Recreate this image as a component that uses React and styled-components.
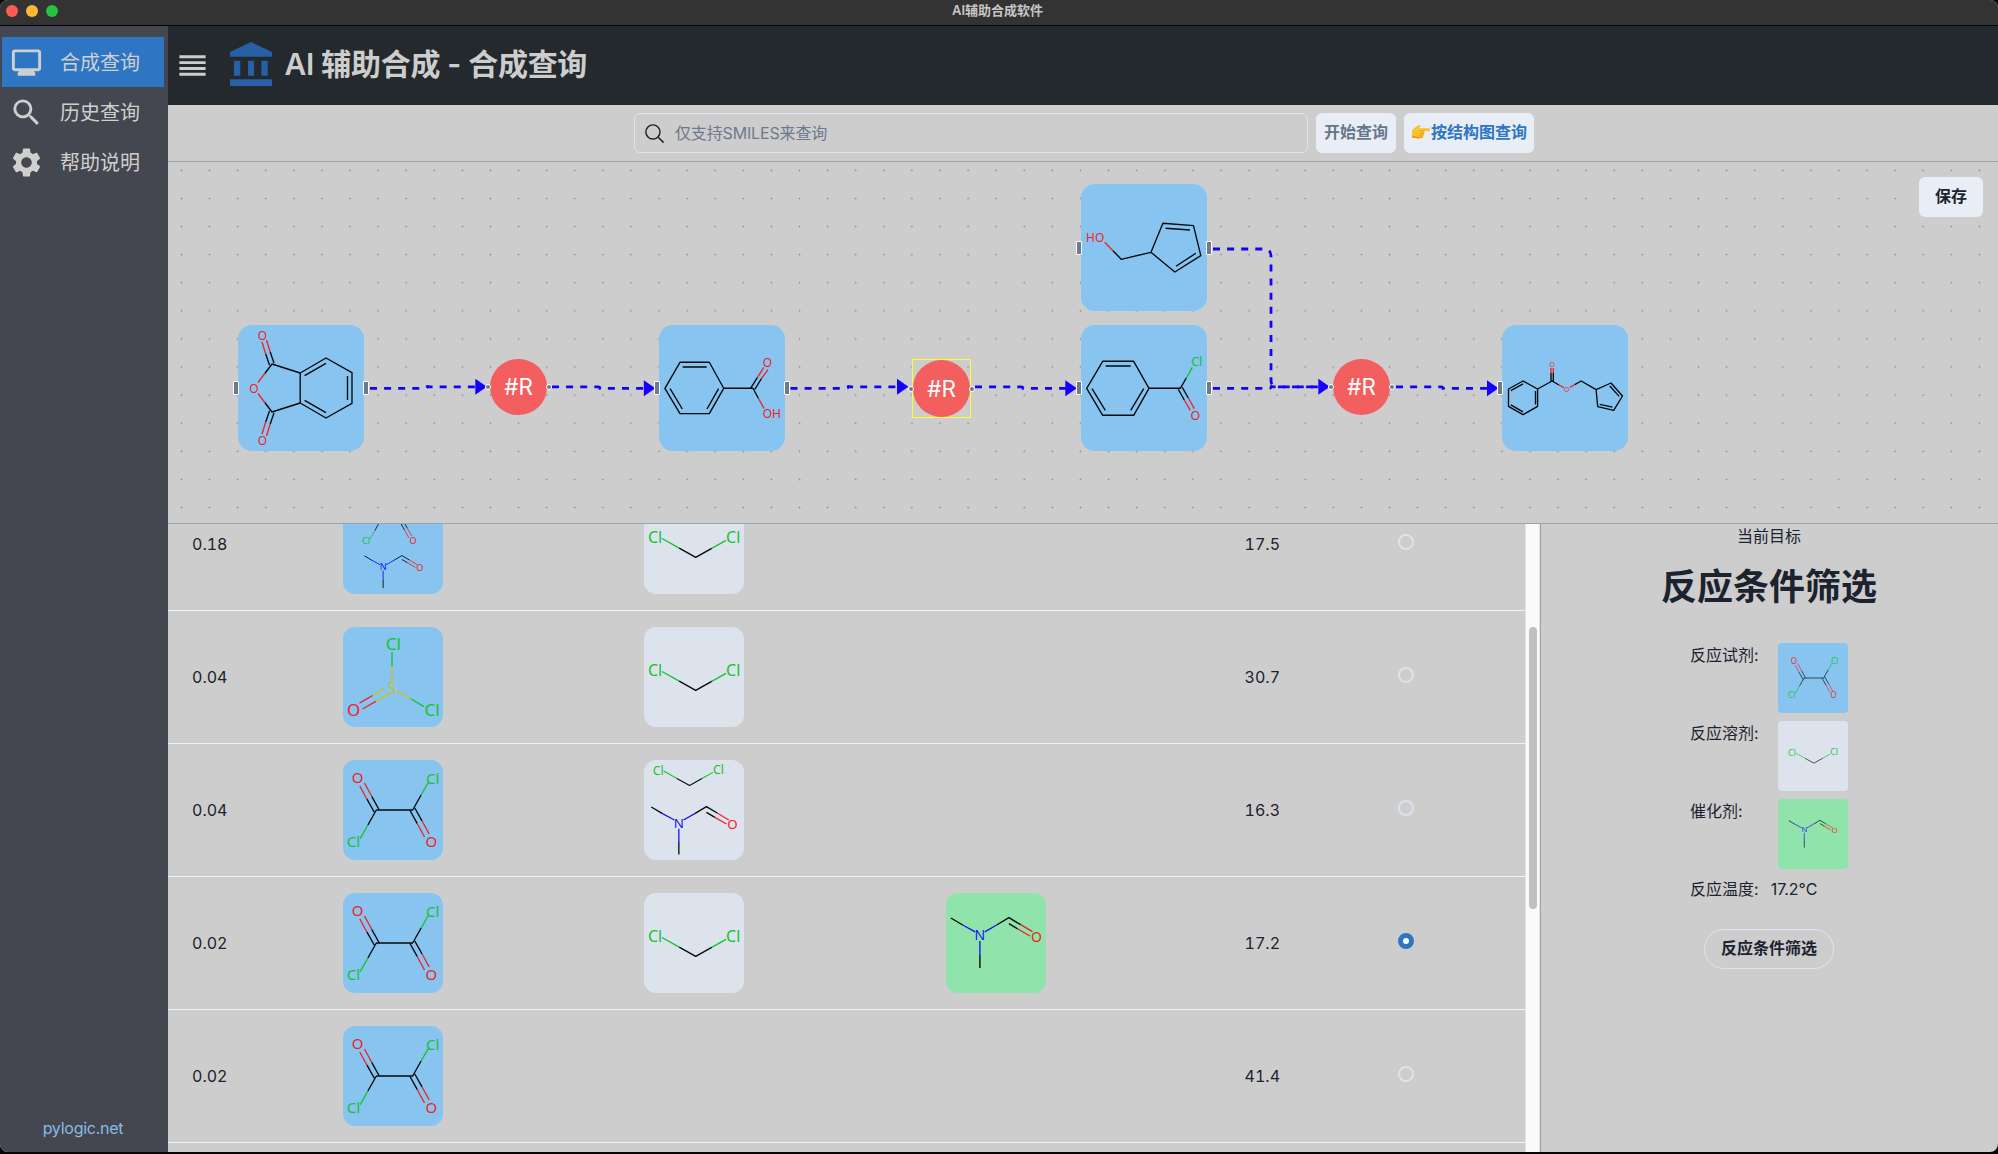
import React from "react";
import styled, { createGlobalStyle } from "styled-components";
import { MdMonitor, MdSearch, MdSettings, MdReorder } from "react-icons/md";
import { IoSearchOutline } from "react-icons/io5";

const color = {
  page: "#cdcdcd",
  line: "#97a4b4",
  pale: "#e9eef6",
  blue: "#87c4ef",
  mist: "#dde3ed",
  green: "#8fe3ab",
  accent: "#2e75c4",
  ink: "#1c222e",
  edge: "#1400ff",
};

const Global = createGlobalStyle`
  *, *::before, *::after { box-sizing: border-box; }
  body {
    margin: 0;
    background: #060606;
    color: ${color.ink};
    font: 16px/24px Inter, "Noto Sans CJK SC", sans-serif;
  }
  h1, h2, p { margin: 0; }
  button { font: inherit; padding: 0; cursor: pointer; }
`;

const Window = styled.div`
  width: 1998px;
  height: 1152px;
  display: flex;
  flex-direction: column;
  border-radius: 8px;
  overflow: hidden;
  background: ${color.page};
`;

const TitleBar = styled.header`
  flex: none;
  height: 26px;
  display: grid;
  grid-template-columns: 1fr auto 1fr;
  align-items: center;
  padding: 0 9px 3px 6px;
  background: #333;
  border-bottom: 1px solid #050505;
  color: #c6c6c6;
  font-size: 13px;
  font-weight: 600;
  line-height: 20px;
`;

const WindowTitle = styled.span`
  padding-bottom: 2px;
`;

const Lights = styled.div`
  display: flex;
  gap: 8px;
`;

const Light = styled.span`
  width: 12px;
  height: 12px;
  border-radius: 50%;
  background: ${(p) => p.$tone};
`;

const Body = styled.div`
  flex: 1;
  min-height: 0;
  display: flex;
`;

const Sidebar = styled.nav`
  flex: none;
  width: 168px;
  display: flex;
  flex-direction: column;
  padding: 11px 4px 12px 2px;
  background: #44474f;
`;

const NavItem = styled.a`
  height: 50px;
  display: flex;
  align-items: center;
  gap: 16px;
  padding-left: 7px;
  background: ${(p) => (p.$active ? color.accent : "transparent")};
  color: #cfcfcf;
  font-size: 20px;
`;

const NavLabel = styled.span`
  padding-top: 1px;
`;

const SiteLink = styled.a`
  margin-top: auto;
  text-align: center;
  color: #85bde6;
  letter-spacing: -0.25px;
`;

const Main = styled.main`
  flex: 1;
  min-width: 0;
  display: flex;
  flex-direction: column;
`;

const Header = styled.div`
  flex: none;
  height: 79px;
  display: flex;
  align-items: center;
  padding-left: 7px;
  background: #23292d;
  color: #cdcdcd;
`;

const Brand = styled.h1`
  display: flex;
  align-items: center;
  gap: 13px;
  margin-left: 19.5px;
  padding-bottom: 3px;
  font-size: 30px;
  line-height: 40px;
  font-weight: 600;
  letter-spacing: -0.3px;
`;

const SearchBar = styled.div`
  flex: none;
  height: 57px;
  display: flex;
  justify-content: center;
  gap: 8px;
  padding: 8px 0 0 2px;
  border-bottom: 1px solid ${color.line};
`;

const SearchField = styled.label`
  width: 674px;
  height: 40px;
  display: flex;
  align-items: center;
  gap: 9px;
  padding-left: 8px;
  border: 1px solid #dfe5ee;
  border-radius: 6px;
  color: ${color.ink};
`;

const SearchInput = styled.input`
  flex: 1;
  border: 0;
  padding: 0;
  outline: 0;
  background: transparent;
  font: inherit;
  letter-spacing: -0.15px;
  &::placeholder { color: #6d7a8e; opacity: 1; }
`;

const Button = styled.button`
  width: ${(p) => p.$width}px;
  height: 40px;
  display: flex;
  align-items: center;
  justify-content: center;
  padding-bottom: 2px;
  border: ${(p) => (p.$outline ? "1px solid #dfe5ee" : "0")};
  border-radius: ${(p) => (p.$outline ? "20px" : "6px")};
  background: ${(p) => (p.$outline ? "transparent" : color.pale)};
  color: ${(p) => p.$tone || color.ink};
  font-weight: 600;
`;

const Canvas = styled.section`
  flex: none;
  position: relative;
  height: 362px;
  overflow: hidden;
  border-bottom: 1px solid ${color.line};
  background-image: radial-gradient(circle at 14.05px 14.05px, #8e8e8e 0.6px, transparent 1.2px);
  background-size: 28.1px 28.1px;
  background-position: -0.6px -5.7px;
`;

const Edges = styled.svg`
  position: absolute;
  inset: 0;
  width: 100%;
  height: 100%;
`;

const SavePanel = styled.div`
  position: absolute;
  top: 15px;
  right: 15px;
`;

const MoleculeNode = styled.div`
  position: absolute;
  left: ${(p) => p.$x}px;
  top: ${(p) => p.$y}px;
  width: 126.4px;
  height: 126.4px;
  border-radius: 14px;
  background: ${color.blue};
`;

const ReactionNode = styled.div`
  position: absolute;
  left: ${(p) => p.$x}px;
  top: ${(p) => p.$y}px;
  width: ${(p) => (p.$selected ? 59 : 56.4)}px;
  height: ${(p) => (p.$selected ? 59 : 56.4)}px;
  border: ${(p) => (p.$selected ? "1px solid #ffff2e" : "0")};
`;

const ReactionDisc = styled.div`
  width: 100%;
  height: 100%;
  display: grid;
  place-items: center;
  border-radius: 50%;
  background: #f35e5e;
  color: #fff;
  font-size: 22.4px;
`;

const Handle = styled.span`
  position: absolute;
  top: 50%;
  ${(p) => p.$side}: -5px;
  width: 6px;
  height: ${(p) => (p.$round ? 6.5 : 14)}px;
  margin-top: ${(p) => (p.$round ? -3 : -7)}px;
  border: 1px solid #fff;
  border-radius: ${(p) => (p.$round ? 3 : 1)}px;
  background: #6b7b8d;
`;

const Lower = styled.div`
  flex: 1;
  min-height: 0;
  display: flex;
`;

const TableArea = styled.div`
  width: 1357px;
  overflow: hidden;
  font-variant-numeric: lining-nums tabular-nums;
`;

const Rows = styled.div`
  margin-top: -46px;
`;

const Row = styled.div`
  height: 133px;
  display: grid;
  grid-template-columns: 151px 301px 302px 250px 132px 221px;
  align-items: center;
  border-bottom: 1px solid #edf1f8;
`;

const Cell = styled.div`
  padding: 0 24px;
  text-align: ${(p) => (p.$numeric ? "right" : "left")};
`;

const RadioCell = styled.div`
  padding: 0 0 4px 93.5px;
`;

const Radio = styled.span`
  display: block;
  width: 16px;
  height: 16px;
  border-radius: 50%;
  border: ${(p) => (p.$on ? `5px solid ${color.accent}` : "2px solid #dde3ec")};
  background: ${(p) => (p.$on ? "#fff" : "transparent")};
`;

const Tile = styled.div`
  width: ${(p) => p.$size || 100}px;
  height: ${(p) => p.$size || 100}px;
  padding: ${(p) => (p.$size ? 8 : 0)}px;
  border-radius: ${(p) => (p.$size ? 4 : 12)}px;
  background: ${(p) => p.$tone};
`;

const ScrollTrack = styled.div`
  width: 15px;
  padding: 103px 2px 0 3px;
  border-left: 1px solid #e4e4e4;
  border-right: 1px solid #e4e4e4;
  background: #fafafa;
`;

const ScrollThumb = styled.div`
  width: 8px;
  height: 282px;
  border-radius: 4px;
  background: #c1c1c1;
`;

const Detail = styled.aside`
  flex: 1;
  display: flex;
  flex-direction: column;
  align-items: center;
  padding-right: 1px;
  border-left: 1px solid ${color.line};
`;

const DetailTitle = styled.h2`
  margin-top: 18px;
  font-size: 36px;
  line-height: 43px;
  font-weight: 700;
`;

const Conditions = styled.div`
  width: 158px;
  display: flex;
  flex-direction: column;
  gap: 8px;
  margin: 34px 0 28px;
`;

const Condition = styled.div`
  display: flex;
  justify-content: ${(p) => (p.$tight ? "flex-start" : "space-between")};
  gap: ${(p) => (p.$tight ? 12 : 0)}px;
`;

const Drawing = styled.svg`
  display: block;
  width: 100%;
  height: 100%;
  overflow: visible;
`;

const K = "#05080a";
const R = "#f32222";
const G = "#12c42e";
const B = "#1414f5";
const S = "#c6c21c";

function Bonds({ list, width = 1.35 }) {
  return list.map(([stroke, d], i) => (
    <path key={i} d={d} stroke={stroke} strokeWidth={width} fill="none" strokeLinejoin="round" />
  ));
}

function Atoms({ list, size }) {
  return list.map(([fill, x, y, label], i) => (
    <text
      key={i}
      x={x}
      y={y + size * 0.36}
      fill={fill}
      fontSize={size}
      fontFamily='"Noto Sans", "Open Sans", sans-serif'
      textAnchor="middle"
    >
      {label}
    </text>
  ));
}

function Oxalyl() {
  return (
    <>
      <Bonds
        list={[
          [K, "M33.3 50H70M36 49.5L28.7 36.3M31.2 52L24 39.2M33.3 50L24.9 65"],
          [R, "M28.7 36.3L21.5 23M24 39.2L16.8 26"],
          [G, "M24.9 65L17.2 78.6"],
          [K, "M67 50.5L74.3 63.7M71.8 48L79 60.8M69.7 50L78.1 35"],
          [R, "M74.3 63.7L81.5 77M79 60.8L86.2 74"],
          [G, "M78.1 35L85.3 22.5"],
        ]}
      />
      <Atoms
        size={15}
        list={[
          [R, 14.7, 18, "O"],
          [G, 89.8, 18.3, "Cl"],
          [G, 10.5, 82, "Cl"],
          [R, 88.4, 82, "O"],
        ]}
      />
    </>
  );
}

function Dichloromethane() {
  return (
    <>
      <Bonds
        list={[
          [G, "M18 44.5L35.2 54.2M67.7 54.3L82 46.3"],
          [K, "M35.2 54.2L51.7 63.3L67.7 54.3"],
        ]}
      />
      <Atoms size={16} list={[[G, 11, 43.5, "Cl"], [G, 89.2, 43.3, "Cl"]]} />
    </>
  );
}

function Formamide() {
  return (
    <>
      <Bonds
        list={[
          [K, "M4.9 25L16.7 32M50.6 32L62.9 24.7L74.7 31.7M62.9 30.7L71.8 36M33.9 62V75"],
          [B, "M16.7 32L29.2 38.8M38.8 38.8L50.6 32M33.9 48V62"],
          [R, "M74.7 31.7L86.5 38.7M71.8 36L84 43"],
        ]}
      />
      <Atoms size={14} list={[[B, 33.9, 41.7, "N"], [R, 90.4, 43.7, "O"]]} />
    </>
  );
}

function Thionyl() {
  return (
    <>
      <Bonds
        list={[
          [G, "M49 25.3V39M68 72L81 79.7"],
          [S, "M49 39V54.3M54.7 64.7L68 72M41.3 61.3L29.5 68.5M46.7 66.3L32.8 74.3"],
          [R, "M29.5 68.5L16.5 76.2M32.8 74.3L19.5 82"],
        ]}
      />
      <Atoms
        size={17}
        list={[
          [G, 50.4, 17.3, "Cl"],
          [S, 49, 61, "S"],
          [R, 10.7, 83.3, "O"],
          [G, 89, 83.3, "Cl"],
        ]}
      />
    </>
  );
}

function OxalylLowerHalf() {
  return (
    <>
      <Bonds
        list={[
          [K, "M33.3 50H70M33.3 50L24.9 65M67 50.5L74.3 63.7M71.8 48L79 60.8"],
          [R, "M74.3 63.7L81.5 77M79 60.8L86.2 74"],
          [G, "M24.9 65L17.2 78.6"],
        ]}
      />
      <Atoms size={15} list={[[G, 10.5, 82, "Cl"], [R, 88.4, 82, "O"]]} />
    </>
  );
}

function OxalylWithFormamide() {
  return (
    <>
      <g transform="translate(16.8 -2.4) scale(.602)"><OxalylLowerHalf /></g>
      <g transform="translate(18.2 45.6) scale(.647)"><Formamide /></g>
    </>
  );
}

function DichloromethaneWithFormamide() {
  return (
    <>
      <g transform="translate(5.8 -23.3) scale(.77)"><Dichloromethane /></g>
      <g transform="translate(2.65 23.2) scale(.95)"><Formamide /></g>
    </>
  );
}

function Phthalic() {
  const carbonyl = (
    <Bonds
      list={[
        [K, "M62.2 48L34 39L26.8 48.5M36 38L32.2 27M31.5 40L27.7 29"],
        [R, "M26.8 48.5L20 57.5M32.2 27L28.5 15M27.7 29L24 17"],
      ]}
    />
  );
  return (
    <>
      <Bonds
        list={[
          [K, "M62.2 48L88 33L114 47.7V78.3L88 93L62.2 78ZM66.6 50.7L88 38.3M66.6 75.3L88 87.7M109.5 51V75"],
        ]}
      />
      {carbonyl}
      <g transform="matrix(1 0 0 -1 0 126)">{carbonyl}</g>
      <Atoms size={12} list={[[R, 24.4, 10.7, "O"], [R, 15.9, 63.2, "O"], [R, 24.4, 115.7, "O"]]} />
    </>
  );
}

function BenzoicAcid() {
  return (
    <>
      <Bonds
        list={[
          [K, "M5.9 63.3L21 37.3H50.3L64.7 63.3L50.3 88.7H21ZM23.7 42H47.7M11.1 63.7L23.3 84M59.6 63.7L48 84M64.7 63.3H94L99.5 73.5M95.8 64.3L102.5 53.5M92 62.7L98.5 52.3"],
          [R, "M99.5 73.5L105 83.5M102.5 53.5L109 44.7M98.5 52.3L104.7 42.5"],
        ]}
      />
      <Atoms size={12} list={[[R, 108.4, 38, "O"], [R, 112.8, 88.5, "OH"]]} />
    </>
  );
}

function BenzoylChloride() {
  return (
    <>
      <Bonds
        list={[
          [K, "M5.7 63.3L21.7 36.3H52.7L68 63.3L52.7 90.3H21.7ZM24.7 41H49.7M11 63.7L24.3 85.3M62.7 63.7L49.7 85.3M68 63.3H99.3L105.3 53M101.3 62.3L107.3 73M97.3 64.3L103.3 75"],
          [G, "M105.3 53L111.3 42.3"],
          [R, "M107.3 73L113.3 83.7M103.3 75L109.3 85.3"],
        ]}
      />
      <Atoms size={12.5} list={[[G, 115.7, 36.7, "Cl"], [R, 114.3, 90.3, "O"]]} />
    </>
  );
}

function Alcohol() {
  return (
    <>
      <Bonds
        list={[
          [K, "M32 66.7L40.2 75.3L70 68.3L81.9 39.3L112.5 41.7L119.8 71.7L93.8 88L70 68.3M84.6 44.3L109 46M114.8 69.3L95 82.3"],
          [R, "M23.7 58.3L32 66.7"],
        ]}
      />
      <Atoms size={12} list={[[R, 14.2, 53.3, "HO"]]} />
    </>
  );
}

function Ester() {
  return (
    <>
      <Bonds
        list={[
          [K, "M21 56L35.6 64V81.3L21 89.7L6.5 81.3V64ZM8.8 65.7L21 58.9M33.5 66V79.5M8.8 79.9L21 86.8M35.6 64L50.1 56L57 60M49 56V48M51.3 56V48M72.7 59.7L79.2 56L94.1 64.7L109 58L120.5 71L111.7 85.3L95.7 81.7L94.1 64.7M107.8 61L117.2 71.4M97.7 79.4L110.5 82.2"],
          [R, "M57 60L61.8 62.7M67.7 62.5L72.7 59.7M49 48V43M51.3 48V43"],
        ]}
      />
      <Atoms size={6.8} list={[[R, 50.1, 39.7, "O"], [R, 64.7, 64.6, "O"]]} />
    </>
  );
}

function Picture({ of: Molecule, box = 100, faded }) {
  return (
    <Drawing viewBox={`0 0 ${box} ${box}`} opacity={faded ? 0.9 : 1}>
      <Molecule />
    </Drawing>
  );
}

function BankIcon() {
  return (
    <svg width="42" height="44" viewBox="0 0 42 44" fill="#2860a6">
      <path d="M21 0L42 10V14.7H0V10ZM4 18.7h6.3v15H4zM18 18.7h6v15h-6zM31.4 18.7h6.3v15h-6.3zM0 37.3h42V44H0z" />
    </svg>
  );
}

function PointingHand() {
  return (
    <svg width="20" height="16" viewBox="0 0 20 16">
      <path
        d="M1 6.6C3 4.2 5 2.4 7.6 1.2C9 .6 10 1.5 9 2.7L7.8 4.2H17.6C19.6 4.2 19.6 7 17.6 7H13C14 7.6 14 9 13 9.4C13.5 10.2 13.2 11.3 12.2 11.6C12.5 12.6 12 13.6 11 13.8C9.5 14.6 5 14.6 1 13.6Z"
        fill="#fbc22d"
      />
      <path d="M1 11.5C5 13 9 13.2 12 12.6C11.8 13.4 11.5 13.7 11 13.8C9.5 14.6 5 14.6 1 13.6Z" fill="#e89a1a" />
      <path d="M8.6 7H13M8.6 9.4H13M8.3 11.6H12.2" stroke="#d98a14" strokeWidth=".6" />
    </svg>
  );
}

const nav = [
  { label: "合成查询", icon: MdMonitor, active: true },
  { label: "历史查询", icon: MdSearch },
  { label: "帮助说明", icon: MdSettings },
];

const rows = [
  { score: "0.18", reagent: OxalylWithFormamide, solvent: Dichloromethane, temp: "17.5" },
  { score: "0.04", reagent: Thionyl, solvent: Dichloromethane, temp: "30.7" },
  { score: "0.04", reagent: Oxalyl, solvent: DichloromethaneWithFormamide, temp: "16.3" },
  { score: "0.02", reagent: Oxalyl, solvent: Dichloromethane, catalyst: Formamide, temp: "17.2", on: true },
  { score: "0.02", reagent: Oxalyl, temp: "41.4" },
];

const molecules = [
  { x: 69.5, y: 163, of: Phthalic },
  { x: 491, y: 163, of: BenzoicAcid },
  { x: 912.5, y: 22.4, of: Alcohol },
  { x: 912.5, y: 163, of: BenzoylChloride },
  { x: 1334, y: 163, of: Ester, last: true },
];

const reactions = [
  { x: 322.4, y: 196.8 },
  { x: 744, y: 197, selected: true },
  { x: 1165.4, y: 196.8 },
];

const edges = [
  "M202 226.3H257Q259 226.3 259 225T261 224.8H308",
  "M384 224.8H430Q432 224.8 432 226.3H477",
  "M622.5 226.3H678Q680 226.3 680 225T682 224.8H730",
  "M807 224.8H853Q855 224.8 855 226.3H898",
  "M1045 226.3H1101Q1103 226.3 1103 225T1105 224.8H1151",
  "M1045 87H1096Q1103 87 1103 94V218Q1103 224.8 1108 224.8H1151",
  "M1228 224.8H1273Q1275 224.8 1275 226.3H1320",
];

const arrows = [
  [307.3, 224.8], [475.8, 226.3], [729, 224.8], [897.3, 226.3], [1150.3, 224.8], [1319, 226.3],
];

export default function App() {
  return (
    <>
      <Global />
      <Window>
        <TitleBar>
          <Lights>
            <Light $tone="#ff5b55" />
            <Light $tone="#fdb836" />
            <Light $tone="#28c23e" />
          </Lights>
          <WindowTitle>AI辅助合成软件</WindowTitle>
        </TitleBar>
        <Body>
          <Sidebar>
            {nav.map(({ label, icon: Icon, active }) => (
              <NavItem key={label} $active={active}>
                <Icon size={35} />
                <NavLabel>{label}</NavLabel>
              </NavItem>
            ))}
            <SiteLink>pylogic.net</SiteLink>
          </Sidebar>
          <Main>
            <Header>
              <MdReorder size={35} />
              <Brand>
                <BankIcon />
                AI 辅助合成 - 合成查询
              </Brand>
            </Header>
            <SearchBar>
              <SearchField>
                <IoSearchOutline size={23} />
                <SearchInput placeholder="仅支持SMILES来查询" />
              </SearchField>
              <Button $width={80} $tone="#68768c">开始查询</Button>
              <Button $width={130} $tone={color.accent}>
                <PointingHand />
                按结构图查询
              </Button>
            </SearchBar>
            <Canvas>
              <Edges>
                {edges.map((d) => (
                  <path key={d} d={d} fill="none" stroke={color.edge} strokeWidth="2.8" strokeDasharray="7 7.1" />
                ))}
                {arrows.map(([x, y]) => (
                  <path key={x} d={`M${x} ${y - 8}L${x + 11.5} ${y}L${x} ${y + 8}Z`} fill={color.edge} />
                ))}
              </Edges>
              {molecules.map(({ x, y, of, last }) => (
                <MoleculeNode key={`${x}-${y}`} $x={x} $y={y}>
                  <Picture of={of} box={126.4} />
                  <Handle $side="left" />
                  {!last && <Handle $side="right" />}
                </MoleculeNode>
              ))}
              {reactions.map(({ x, y, selected }) => (
                <ReactionNode key={x} $x={x} $y={y} $selected={selected}>
                  <ReactionDisc>#R</ReactionDisc>
                  <Handle $side="left" $round />
                  <Handle $side="right" $round />
                </ReactionNode>
              ))}
              <SavePanel>
                <Button $width={64}>保存</Button>
              </SavePanel>
            </Canvas>
            <Lower>
              <TableArea>
                <Rows>
                  {rows.map((r, i) => (
                    <Row key={i}>
                      <Cell>{r.score}</Cell>
                      <Cell><Tile $tone={color.blue}><Picture of={r.reagent} /></Tile></Cell>
                      <Cell>{r.solvent && <Tile $tone={color.mist}><Picture of={r.solvent} /></Tile>}</Cell>
                      <Cell>{r.catalyst && <Tile $tone={color.green}><Picture of={r.catalyst} /></Tile>}</Cell>
                      <Cell $numeric>{r.temp}</Cell>
                      <RadioCell><Radio $on={r.on} /></RadioCell>
                    </Row>
                  ))}
                </Rows>
              </TableArea>
              <ScrollTrack><ScrollThumb /></ScrollTrack>
              <Detail>
                <p>当前目标</p>
                <DetailTitle>反应条件筛选</DetailTitle>
                <Conditions>
                  <Condition>
                    反应试剂:
                    <Tile $size={70} $tone={color.blue}><Picture of={Oxalyl} faded /></Tile>
                  </Condition>
                  <Condition>
                    反应溶剂:
                    <Tile $size={70} $tone={color.mist}><Picture of={Dichloromethane} faded /></Tile>
                  </Condition>
                  <Condition>
                    催化剂:
                    <Tile $size={70} $tone={color.green}><Picture of={Formamide} faded /></Tile>
                  </Condition>
                  <Condition $tight>
                    反应温度:
                    <span>17.2°C</span>
                  </Condition>
                </Conditions>
                <Button $width={130} $outline>反应条件筛选</Button>
              </Detail>
            </Lower>
          </Main>
        </Body>
      </Window>
    </>
  );
}
